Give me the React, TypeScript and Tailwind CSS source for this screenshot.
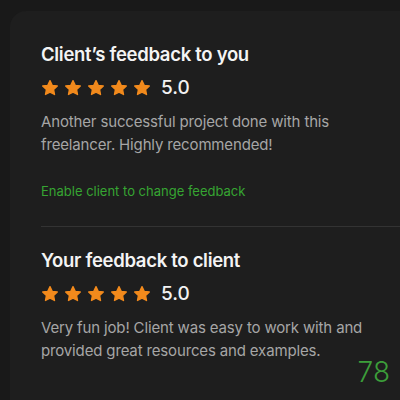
import React from "react";

function Star() {
  return (
    <svg viewBox="0 0 24 24" className="h-[18px] w-[18px]" aria-hidden>
      <path
        d="M12 2.2l2.95 6.2 6.8.85-5 4.7 1.28 6.75L12 17.4l-6.03 3.3 1.28-6.75-5-4.7 6.8-.85z"
        fill="#f28a1c"
        stroke="#f28a1c"
        strokeWidth="1.8"
        strokeLinejoin="round"
      />
    </svg>
  );
}

function Rating({ value }: { value: string }) {
  return (
    <div className="flex items-center">
      <div className="flex gap-[5px]">
        {[0, 1, 2, 3, 4].map((i) => (
          <Star key={i} />
        ))}
      </div>
      <span className="ml-[10px] text-[19px] font-medium leading-6 text-[#f2f2f2]">{value}</span>
    </div>
  );
}

export default function App() {
  return (
    <div
      className="relative h-[400px] w-[400px] overflow-hidden bg-[#191919] pl-[10px] pt-[11px]"
      style={{ fontFamily: "Inter, 'Liberation Sans', sans-serif" }}
    >
      <div className="h-[420px] w-[420px] rounded-tl-2xl bg-[#1e1e1e] pl-[31px] pt-[31px]">
        <section>
          <h2 className="text-[18.5px] font-semibold leading-6 tracking-[-0.3px] text-[#f4f4f4]">
            Client’s feedback to you
          </h2>
          <div className="mt-[10px]">
            <Rating value="5.0" />
          </div>
          <p className="mt-[10px] w-[330px] text-[15px] leading-[23px] tracking-[-0.15px] text-[#a6a6a6]">
            Another successful project done with this freelancer. Highly recommended!
          </p>
          <button className="mt-[25px] text-[13px] leading-5 text-[#36a532]">
            Enable client to change feedback
          </button>
        </section>
        <div className="mt-[24px] h-px bg-[#333333]" />
        <section className="pt-[21px]">
          <h2 className="text-[18.5px] font-semibold leading-6 tracking-[-0.3px] text-[#f4f4f4]">
            Your feedback to client
          </h2>
          <div className="mt-[10px]">
            <Rating value="5.0" />
          </div>
          <p className="mt-[10px] w-[330px] text-[15px] leading-[23px] tracking-[-0.15px] text-[#a6a6a6]">
            Very fun job! Client was easy to work with and provided great resources and examples.
          </p>
        </section>
      </div>
      <span className="absolute bottom-[10px] right-[10px] text-[28px] font-light leading-9 text-[#3c9e3a]">
        78
      </span>
    </div>
  );
}
